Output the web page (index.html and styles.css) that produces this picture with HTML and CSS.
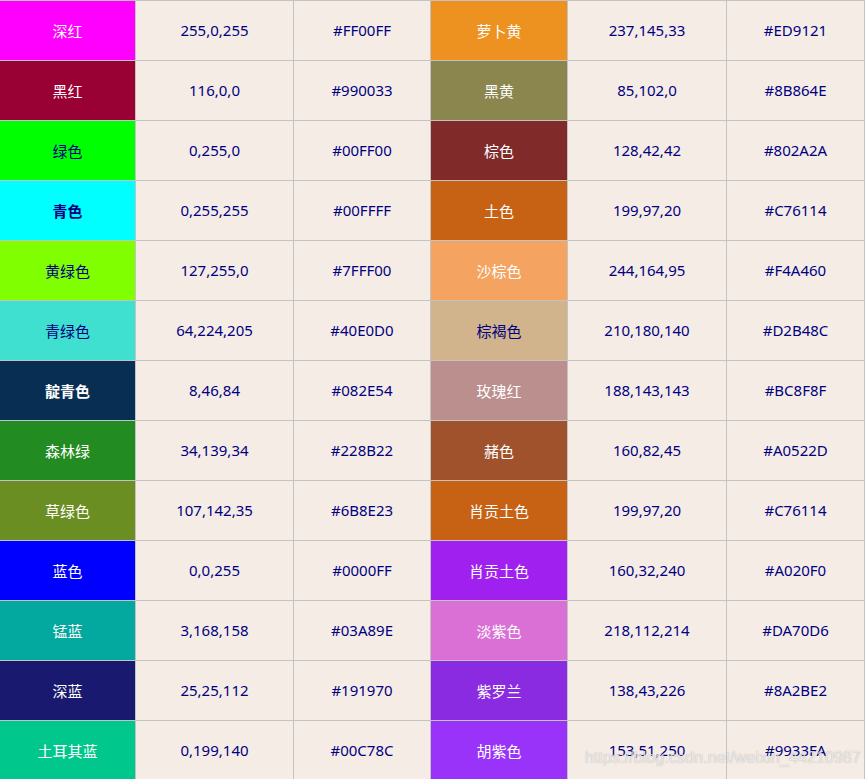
FILE: index.html
```html
<!DOCTYPE html>
<html lang="zh">
<head>
<meta charset="utf-8">
<title>颜色对照表</title>
<link rel="stylesheet" href="styles.css">
</head>
<body>
<div class="page">
<div class="grid">
  <div class="name" style="background:#FF00FF">深红</div><div class="val">255,0,255</div><div class="val">#FF00FF</div>
  <div class="name" style="background:#ED9121">萝卜黄</div><div class="val">237,145,33</div><div class="val">#ED9121</div>

  <div class="name" style="background:#990033">黑红</div><div class="val">116,0,0</div><div class="val">#990033</div>
  <div class="name" style="background:#8B864E">黑黄</div><div class="val">85,102,0</div><div class="val">#8B864E</div>

  <div class="name dark" style="background:#00FF00">绿色</div><div class="val">0,255,0</div><div class="val">#00FF00</div>
  <div class="name" style="background:#802A2A">棕色</div><div class="val">128,42,42</div><div class="val">#802A2A</div>

  <div class="name dark bold" style="background:#00FFFF">青色</div><div class="val">0,255,255</div><div class="val">#00FFFF</div>
  <div class="name" style="background:#C76114">土色</div><div class="val">199,97,20</div><div class="val">#C76114</div>

  <div class="name dark" style="background:#7FFF00">黄绿色</div><div class="val">127,255,0</div><div class="val">#7FFF00</div>
  <div class="name" style="background:#F4A460">沙棕色</div><div class="val">244,164,95</div><div class="val">#F4A460</div>

  <div class="name dark" style="background:#40E0D0">青绿色</div><div class="val">64,224,205</div><div class="val">#40E0D0</div>
  <div class="name dark" style="background:#D2B48C">棕褐色</div><div class="val">210,180,140</div><div class="val">#D2B48C</div>

  <div class="name bold" style="background:#082E54">靛青色</div><div class="val">8,46,84</div><div class="val">#082E54</div>
  <div class="name" style="background:#BC8F8F">玫瑰红</div><div class="val">188,143,143</div><div class="val">#BC8F8F</div>

  <div class="name" style="background:#228B22">森林绿</div><div class="val">34,139,34</div><div class="val">#228B22</div>
  <div class="name" style="background:#A0522D">赭色</div><div class="val">160,82,45</div><div class="val">#A0522D</div>

  <div class="name" style="background:#6B8E23">草绿色</div><div class="val">107,142,35</div><div class="val">#6B8E23</div>
  <div class="name" style="background:#C76114">肖贡土色</div><div class="val">199,97,20</div><div class="val">#C76114</div>

  <div class="name" style="background:#0000FF">蓝色</div><div class="val">0,0,255</div><div class="val">#0000FF</div>
  <div class="name" style="background:#A020F0">肖贡土色</div><div class="val">160,32,240</div><div class="val">#A020F0</div>

  <div class="name" style="background:#03A89E">锰蓝</div><div class="val">3,168,158</div><div class="val">#03A89E</div>
  <div class="name" style="background:#DA70D6">淡紫色</div><div class="val">218,112,214</div><div class="val">#DA70D6</div>

  <div class="name" style="background:#191970">深蓝</div><div class="val">25,25,112</div><div class="val">#191970</div>
  <div class="name" style="background:#8A2BE2">紫罗兰</div><div class="val">138,43,226</div><div class="val">#8A2BE2</div>

  <div class="name" style="background:#00C78C">土耳其蓝</div><div class="val">0,199,140</div><div class="val">#00C78C</div>
  <div class="name" style="background:#9933FA">胡紫色</div><div class="val">153,51,250</div><div class="val">#9933FA</div>
</div>
<div class="watermark">https://blog.csdn.net/weixin_44210987</div>
</div>
</body>
</html>
```
FILE: styles.css
```css
html, body {
  margin: 0;
  padding: 0;
  background: #ffffff;
}

.page {
  position: relative;
  width: 865px;
}

.grid {
  display: grid;
  grid-template-columns: 135px 157px 136px 136px 158px 137px;
  grid-auto-rows: 59px;
  gap: 1px;
  padding: 1px 1px 1px 0;
  background: #c3c3c3;
  width: 864px;
  font-family: "Noto Sans", "Noto Sans CJK SC", sans-serif;
  font-size: 15px;
}

.name,
.val {
  display: flex;
  align-items: center;
  justify-content: center;
  padding-bottom: 1px;
}

.name {
  color: #ffffff;
  font-family: "Noto Sans CJK SC", sans-serif;
}

.name.dark {
  color: #000080;
}

.name.bold {
  font-weight: 700;
}

.val {
  background: #f5ece6;
  color: #000080;
}

.watermark {
  position: absolute;
  left: 585px;
  top: 749px;
  font-family: "Liberation Sans", Arial, sans-serif;
  font-size: 16px;
  color: rgba(255, 255, 255, 0.75);
  text-shadow: 0 0 1px rgba(0, 0, 0, 0.35);
  letter-spacing: 0.1px;
}
```
